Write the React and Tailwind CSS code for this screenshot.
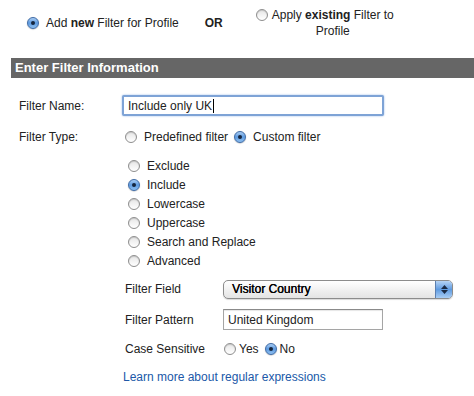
import React from "react";

function Radio({ on }) {
  return on ? (
    <span className="inline-flex h-[12px] w-[12px] shrink-0 items-center justify-center rounded-full border border-[#3d6aa6] bg-gradient-to-b from-[#a9cdf3] via-[#5d9ae0] to-[#8fc0f0] shadow-[0_0.5px_1px_rgba(0,0,0,0.3)]">
      <span className="h-[4px] w-[4px] rounded-full bg-[#15253d]" />
    </span>
  ) : (
    <span className="inline-block h-[12px] w-[12px] shrink-0 rounded-full border border-[#8e8e8e] bg-gradient-to-b from-[#e6e6e6] to-[#ffffff] shadow-[inset_0_1px_1px_rgba(0,0,0,0.15)]" />
  );
}

function Opt({ on, label, gap = "gap-[7px]" }) {
  return (
    <div className={`flex items-center ${gap}`}>
      <Radio on={on} />
      <span>{label}</span>
    </div>
  );
}

export default function App() {
  return (
    <div
      className="relative h-[396px] w-[474px] overflow-hidden bg-white text-[12px] text-[#222]"
      style={{ fontFamily: '"Liberation Sans", Arial, sans-serif' }}
    >
      {/* top choice row */}
      <div className="flex h-[58px] items-start">
        <div className="ml-[27px] mt-[14px] flex items-center gap-[7px]">
          <Radio on />
          <span>
            Add <b>new</b> Filter for Profile
          </span>
        </div>
        <div className="ml-[26px] mt-[14px] font-bold">OR</div>
        <div className="ml-[33px] mt-[7px] flex items-start gap-[4px]">
          <span className="mt-[1px]">
            <Radio />
          </span>
          <div className="text-center leading-[16px]">
            Apply <b>existing</b> Filter to
            <br />
            Profile
          </div>
        </div>
      </div>

      {/* header bar */}
      <div className="ml-[11px] h-[20px] bg-[#666666] pl-[4px] text-[13px] font-bold leading-[20px] text-white">
        Enter Filter Information
      </div>

      {/* filter name */}
      <div className="mt-[17px] flex h-[21px] items-center">
        <div className="w-[122px] pl-[19px]">Filter Name:</div>
        <div className="flex h-[21px] w-[262px] items-center rounded-[2px] border-2 border-[#7ea3d6] bg-white pl-[4px] text-[12px] shadow-[0_0_2px_#8fb3e6]">
          Include only UK<span className="ml-[1px] inline-block h-[14px] w-[1px] bg-black" />
        </div>
      </div>

      {/* filter type */}
      <div className="mt-[11px] flex h-[20px] items-center">
        <div className="w-[122px] pl-[19px]">Filter Type:</div>
        <div className="ml-[3px] flex items-center gap-[6px]">
          <Opt label="Predefined filter" />
          <Opt on label="Custom filter" />
        </div>
      </div>

      {/* custom options */}
      <div className="ml-[128px] mt-[9px] flex flex-col">
        {[
          ["Exclude", false],
          ["Include", true],
          ["Lowercase", false],
          ["Uppercase", false],
          ["Search and Replace", false],
          ["Advanced", false],
        ].map(([l, on]) => (
          <div key={l} className="flex h-[19px] items-center">
            <Opt on={on} label={l} />
          </div>
        ))}
      </div>

      {/* filter field */}
      <div className="mt-[9px] flex h-[20px] items-center">
        <div className="w-[223px] pl-[125px]">Filter Field</div>
        <div className="flex h-[19px] w-[230px] items-center overflow-hidden rounded-[5px] border border-[#8c8c8c] bg-gradient-to-b from-[#ffffff] to-[#e4e4e4] shadow-[0_1px_1px_rgba(0,0,0,0.15)]">
          <span className="flex-1 pl-[8px] text-[12px] text-black [text-shadow:0.3px_0_0_#000]">Visitor Country</span>
          <span className="flex h-full w-[17px] flex-col items-center justify-center gap-[1px] border-l border-[#5b7fb0] bg-gradient-to-b from-[#b6d3f4] via-[#5f9be0] to-[#a8cdf4]">
            <svg width="7" height="4" viewBox="0 0 7 4"><path d="M3.5 0L7 4H0z" fill="#1b2b44" /></svg>
            <svg width="7" height="4" viewBox="0 0 7 4"><path d="M0 0h7L3.5 4z" fill="#1b2b44" /></svg>
          </span>
        </div>
      </div>

      {/* filter pattern */}
      <div className="mt-[10px] flex h-[21px] items-center">
        <div className="w-[223px] pl-[125px]">Filter Pattern</div>
        <div className="flex h-[21px] w-[160px] items-center border border-[#a5a5a5] border-t-[#8a8a8a] bg-white pl-[4px] text-[12px] shadow-[inset_0_1px_1px_rgba(0,0,0,0.1)]">
          United Kingdom
        </div>
      </div>

      {/* case sensitive */}
      <div className="mt-[9px] flex h-[20px] items-center">
        <div className="w-[224px] pl-[125px]">Case Sensitive</div>
        <div className="flex items-center gap-[6px]">
          <Opt label="Yes" gap="gap-[3px]" />
          <Opt on label="No" gap="gap-[3px]" />
        </div>
      </div>

      {/* link */}
      <div className="ml-[123px] mt-[9px] text-[12px] text-[#2058a8]">
        Learn more about regular expressions
      </div>
    </div>
  );
}
